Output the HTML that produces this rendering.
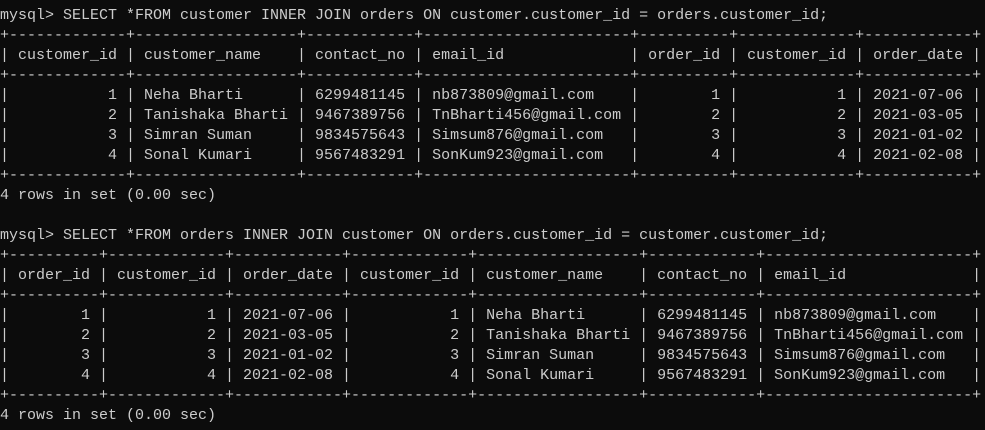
<!DOCTYPE html>
<html><head><meta charset="utf-8"><style>
html,body{margin:0;padding:0;background:#0c0c0c;width:985px;height:430px;overflow:hidden}
pre{margin:0;padding:6px 0 0 0;font-family:"Liberation Mono",monospace;font-size:15px;line-height:20px;color:#cccccc;white-space:pre}
</style></head><body><pre>mysql&gt; SELECT *FROM customer INNER JOIN orders ON customer.customer_id = orders.customer_id;
+-------------+------------------+------------+-----------------------+----------+-------------+------------+
| customer_id | customer_name    | contact_no | email_id              | order_id | customer_id | order_date |
+-------------+------------------+------------+-----------------------+----------+-------------+------------+
|           1 | Neha Bharti      | 6299481145 | nb873809@gmail.com    |        1 |           1 | 2021-07-06 |
|           2 | Tanishaka Bharti | 9467389756 | TnBharti456@gmail.com |        2 |           2 | 2021-03-05 |
|           3 | Simran Suman     | 9834575643 | Simsum876@gmail.com   |        3 |           3 | 2021-01-02 |
|           4 | Sonal Kumari     | 9567483291 | SonKum923@gmail.com   |        4 |           4 | 2021-02-08 |
+-------------+------------------+------------+-----------------------+----------+-------------+------------+
4 rows in set (0.00 sec)

mysql&gt; SELECT *FROM orders INNER JOIN customer ON orders.customer_id = customer.customer_id;
+----------+-------------+------------+-------------+------------------+------------+-----------------------+
| order_id | customer_id | order_date | customer_id | customer_name    | contact_no | email_id              |
+----------+-------------+------------+-------------+------------------+------------+-----------------------+
|        1 |           1 | 2021-07-06 |           1 | Neha Bharti      | 6299481145 | nb873809@gmail.com    |
|        2 |           2 | 2021-03-05 |           2 | Tanishaka Bharti | 9467389756 | TnBharti456@gmail.com |
|        3 |           3 | 2021-01-02 |           3 | Simran Suman     | 9834575643 | Simsum876@gmail.com   |
|        4 |           4 | 2021-02-08 |           4 | Sonal Kumari     | 9567483291 | SonKum923@gmail.com   |
+----------+-------------+------------+-------------+------------------+------------+-----------------------+
4 rows in set (0.00 sec)</pre></body></html>
